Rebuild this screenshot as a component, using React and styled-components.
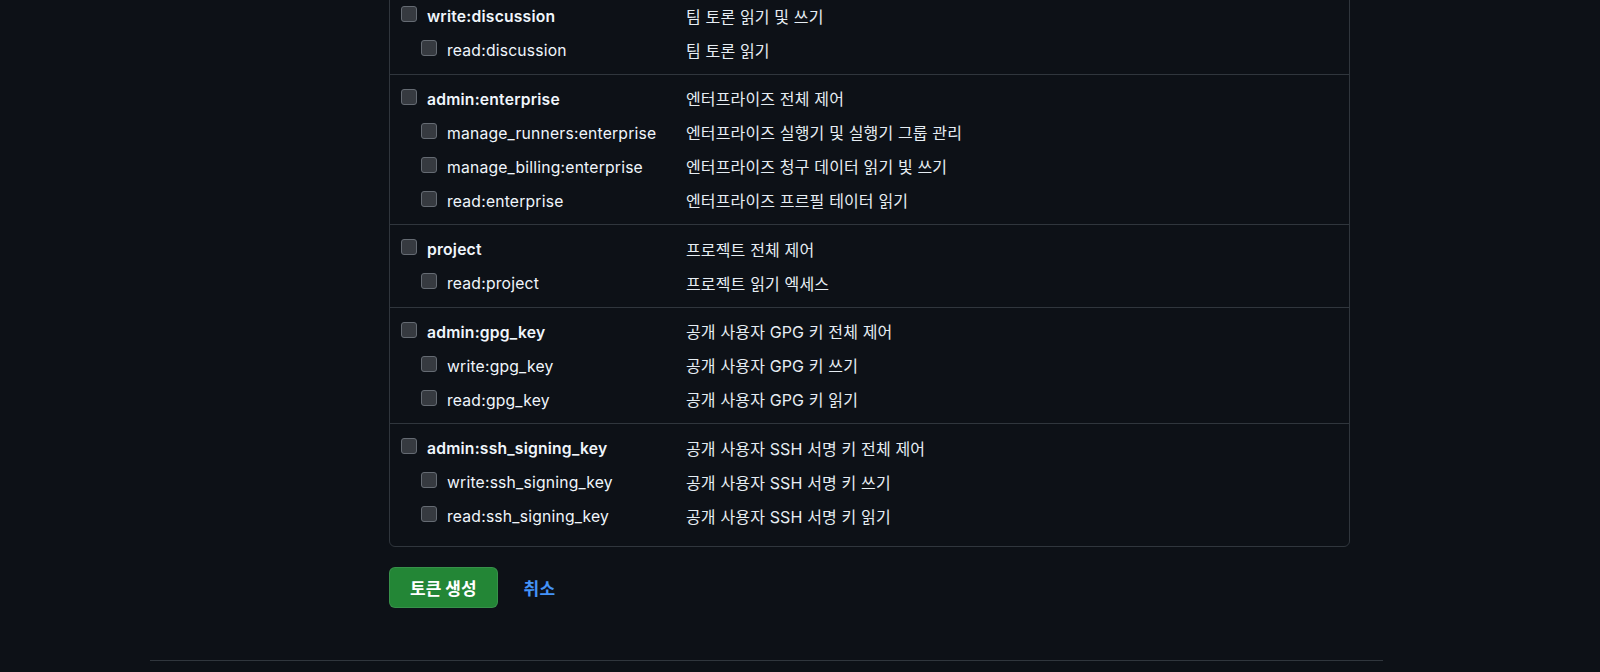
import styled, { createGlobalStyle } from "styled-components";

const GlobalStyle = createGlobalStyle`
  html, body {
    margin: 0;
    padding: 0;
    background: #0d1117;
    height: 672px;
    overflow: hidden;
  }
  body {
    font-family: Inter, "Noto Sans CJK KR", "Noto Sans", sans-serif;
    color: #f0f6fc;
  }
`;

const Page = styled.div`
  display: flex;
  flex-direction: column;
  height: 672px;
`;

const Main = styled.main`
  margin-left: 389px;
  width: 961px;
  margin-top: -9px;
`;

const ScopeBox = styled.div`
  border: 1px solid #30363d;
  border-radius: 6px;
  padding-bottom: 6px;
`;

const Group = styled.div`
  padding: 7px 0 6.5px;
  & + & {
    border-top: 1px solid #30363d;
  }
`;

const Row = styled.label`
  display: flex;
  align-items: center;
  height: 34px;
  padding-left: 11px;
  padding-top: 1px;
  box-sizing: border-box;
`;

const NameCell = styled.div`
  display: flex;
  align-items: center;
  width: 285px;
  padding-left: ${(p) => (p.$child ? "20px" : "0")};
  box-sizing: border-box;
`;

const Box = styled.span`
  flex: none;
  width: 16px;
  height: 16px;
  box-sizing: border-box;
  border: 1px solid #656b73;
  background: #363a40;
  border-radius: 3px;
  align-self: flex-start;
  margin-top: 6px;
  margin-right: 10px;
`;

const Name = styled.span`
  font-size: 15.7px;
  font-weight: ${(p) => (p.$child ? 400 : 600)};
  letter-spacing: 0.2px;
  color: #f0f6fc;
  white-space: nowrap;
  line-height: 33px;
`;

const Desc = styled.span`
  font-size: 16px;
  color: #e6edf3;
  white-space: nowrap;
  letter-spacing: 0.15px;
  padding-bottom: 2px;
`;

const Actions = styled.div`
  display: flex;
  align-items: center;
  gap: 26px;
  margin-top: 20px;
`;

const CreateButton = styled.button`
  height: 41px;
  padding: 0 20px;
  background: #238636;
  border: 1px solid rgba(240, 246, 252, 0.1);
  border-radius: 6px;
  color: #ffffff;
  font-family: inherit;
  font-size: 17px;
  font-weight: 700;
  cursor: pointer;
`;

const CancelLink = styled.a`
  color: #4493f8;
  font-size: 17px;
  font-weight: 700;
  letter-spacing: 0.3px;
  text-decoration: none;
`;

const Footer = styled.footer`
  margin-top: auto;
  margin-left: 150px;
  width: 1233px;
  height: 11px;
  border-top: 1px solid #30363d;
`;

const groups = [
  [
    ["write:discussion", "팀 토론 읽기 및 쓰기"],
    ["read:discussion", "팀 토론 읽기"],
  ],
  [
    ["admin:enterprise", "엔터프라이즈 전체 제어"],
    ["manage_runners:enterprise", "엔터프라이즈 실행기 및 실행기 그룹 관리"],
    ["manage_billing:enterprise", "엔터프라이즈 청구 데이터 읽기 빛 쓰기"],
    ["read:enterprise", "엔터프라이즈 프르필 테이터 읽기"],
  ],
  [
    ["project", "프로젝트 전체 제어"],
    ["read:project", "프로젝트 읽기 엑세스"],
  ],
  [
    ["admin:gpg_key", "공개 사용자 GPG 키 전체 제어"],
    ["write:gpg_key", "공개 사용자 GPG 키 쓰기"],
    ["read:gpg_key", "공개 사용자 GPG 키 읽기"],
  ],
  [
    ["admin:ssh_signing_key", "공개 사용자 SSH 서명 키 전체 제어"],
    ["write:ssh_signing_key", "공개 사용자 SSH 서명 키 쓰기"],
    ["read:ssh_signing_key", "공개 사용자 SSH 서명 키 읽기"],
  ],
];

export default function App() {
  return (
    <Page>
      <GlobalStyle />
      <Main>
        <ScopeBox>
          {groups.map((rows, gi) => (
            <Group key={gi}>
              {rows.map(([name, desc], ri) => (
                <Row key={name}>
                  <NameCell $child={ri > 0}>
                    <Box />
                    <Name $child={ri > 0}>{name}</Name>
                  </NameCell>
                  <Desc>{desc}</Desc>
                </Row>
              ))}
            </Group>
          ))}
        </ScopeBox>
        <Actions>
          <CreateButton>토큰 생성</CreateButton>
          <CancelLink href="#">취소</CancelLink>
        </Actions>
      </Main>
      <Footer />
    </Page>
  );
}
